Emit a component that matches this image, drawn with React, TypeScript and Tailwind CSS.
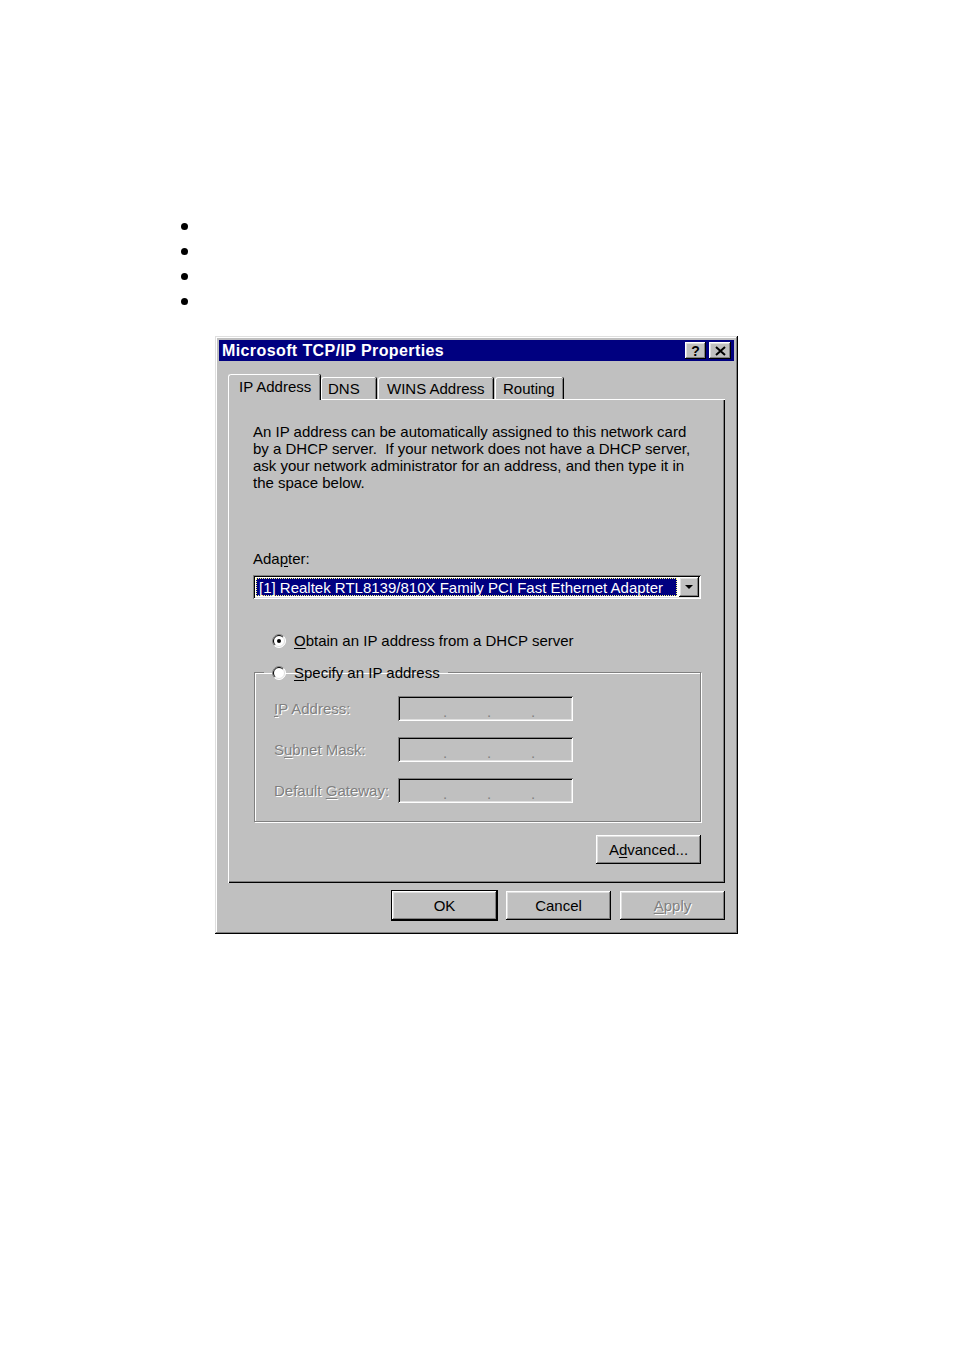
import type { ReactNode } from 'react';

const raised =
  'shadow-[inset_-1px_-1px_#000,inset_1px_1px_#fff,inset_-2px_-2px_#808080,inset_2px_2px_#dfdfdf]';
const sunken =
  'shadow-[inset_1px_1px_#808080,inset_-1px_-1px_#fff,inset_2px_2px_#000,inset_-2px_-2px_#dfdfdf]';
const disabledText = 'text-[#808080] [text-shadow:1px_1px_0_#fff]';

function Key({ children }: { children: ReactNode }) {
  return <span className="underline underline-offset-2">{children}</span>;
}

// classic sunken radio circle
function Radio({ checked }: { checked?: boolean }) {
  return (
    <svg width="14" height="14" viewBox="0 0 14 14" className="shrink-0">
      <circle cx="7" cy="7" r="6.5" fill="#fff" />
      <path d="M2.4 11.6A6.5 6.5 0 0 1 11.6 2.4" fill="none" stroke="#808080" strokeWidth="1" />
      <path d="M3.1 10.9A5.5 5.5 0 0 1 10.9 3.1" fill="none" stroke="#000" strokeWidth="1" />
      <path d="M11.6 2.4A6.5 6.5 0 0 1 2.4 11.6" fill="none" stroke="#fff" strokeWidth="1" />
      <path d="M10.9 3.1A5.5 5.5 0 0 1 3.1 10.9" fill="none" stroke="#dfdfdf" strokeWidth="1" />
      {checked && <circle cx="7" cy="7" r="2" fill="#000" />}
    </svg>
  );
}

function Tab({ label, selected, className }: { label: string; selected?: boolean; className: string }) {
  return (
    <div
      className={
        selected
          ? `relative z-10 -mb-px flex h-[26px] items-start rounded-tl-[3px] rounded-tr-[2px] border-l border-t border-white bg-[#c0c0c0] pt-[3px] shadow-[inset_-1px_0_#808080,1px_0_#000] ${className}`
          : `flex h-[22px] items-start rounded-tl-[3px] rounded-tr-[2px] border-l border-t border-white pt-[2px] shadow-[inset_-1px_0_#808080,1px_0_#000] ${className}`
      }
    >
      {label}
    </div>
  );
}

function IpField({ label }: { label: ReactNode }) {
  return (
    <div className="flex h-[25px] items-center">
      <span className={`w-[124px] ${disabledText}`}>{label}</span>
      <div className={`relative h-[25px] w-[175px] ${sunken}`}>
        <div className="flex h-full items-center pl-[45px] pt-[5px] text-[#808080]">
          <span className="w-[44px]">.</span>
          <span className="w-[44px]">.</span>
          <span>.</span>
        </div>
      </div>
    </div>
  );
}

function Button({ children, className = '' }: { children: ReactNode; className?: string }) {
  return (
    <div className={`flex h-[29px] w-[105px] items-center justify-center bg-[#c0c0c0] ${raised} ${className}`}>
      {children}
    </div>
  );
}

export default function App() {
  return (
    <div className="min-h-[1350px] bg-white font-['Liberation_Sans',Arial,sans-serif] text-[15px] leading-[17px] text-black">
      <ul className="flex flex-col gap-[18px] pl-[181px] pt-[223px]">
        {[0, 1, 2, 3].map((i) => (
          <li key={i} className="h-[7px] w-[7px] rounded-full bg-black" />
        ))}
      </ul>

      <div className="ml-[215px] mt-[31px] w-[523px] bg-[#c0c0c0] p-[4px] shadow-[inset_-1px_-1px_#000,inset_1px_1px_#dfdfdf,inset_-2px_-2px_#808080,inset_2px_2px_#fff]">
        {/* title bar */}
        <div className="flex h-[21px] items-center justify-between bg-[#000080] pl-[3px] pr-[3px]">
          <span className="text-[16px] font-bold tracking-[0.4px] text-white">Microsoft TCP/IP Properties</span>
          <div className="flex gap-[3px]">
            <div className={`flex h-[17px] w-[21px] items-center justify-center bg-[#c0c0c0] text-[14px] font-bold leading-none ${raised}`}>
              ?
            </div>
            <div className={`flex h-[17px] w-[22px] items-center justify-center bg-[#c0c0c0] ${raised}`}>
              <svg width="11" height="10" viewBox="0 0 11 10">
                <path d="M1 1L10 9M10 1L1 9" stroke="#000" strokeWidth="2" />
              </svg>
            </div>
          </div>
        </div>

        <div className="px-[9px]">
          {/* tabs */}
          <div className="mt-[13px] flex items-end">
            <Tab label="IP Address" selected className="w-[92px] pl-[10px]" />
            <Tab label="DNS" className="ml-px w-[55px] pl-[6px]" />
            <Tab label="WINS Address" className="ml-[2px] w-[115px] pl-[8px]" />
            <Tab label="Routing" className="ml-[2px] w-[68px] pl-[7px]" />
          </div>

          {/* panel */}
          <div className="flex h-[484px] flex-col pl-[25px] pr-[24px] pt-[24px] shadow-[inset_1px_1px_#fff,inset_-1px_-1px_#000,inset_-2px_-2px_#808080]">
            <p>
              An IP address can be automatically assigned to this network card
              <br />
              by a DHCP server.&nbsp; If your network does not have a DHCP server,
              <br />
              ask your network administrator for an address, and then type it in
              <br />
              the space below.
            </p>

            <p className="mt-[59px]">
              Ada<Key>p</Key>ter:
            </p>
            <div className={`mt-[8px] flex h-[24px] w-[448px] items-stretch bg-white p-[2px] ${sunken}`}>
              <div className="m-[1px] flex flex-1 items-center bg-[#000080] pl-[3px] text-white outline-1 outline-dotted outline-[#ffff80] -outline-offset-1">
                [1] Realtek RTL8139/810X Family PCI Fast Ethernet Adapter
              </div>
              <div className={`ml-[1px] flex w-[20px] items-center justify-center bg-[#c0c0c0] ${raised}`}>
                <svg width="8" height="5" viewBox="0 0 8 5">
                  <path d="M0 0H8L4 4Z" fill="#000" />
                </svg>
              </div>
            </div>

            <div className="mt-[33px] flex items-center gap-[8px] pl-[19px]">
              <Radio checked />
              <span>
                <Key>O</Key>btain an IP address from a DHCP server
              </span>
            </div>

            <fieldset className="mt-[15px] ml-px h-[158px] border border-[#808080] pl-[9px] shadow-[inset_1px_1px_#fff,1px_1px_#fff]">
              <legend className="flex items-center gap-[8px] pl-[8px] pr-[8px]">
                <Radio />
                <span>
                  <Key>S</Key>pecify an IP address
                </span>
              </legend>
              <div className="mt-[15px] flex flex-col gap-[16px] pl-[10px]">
                <IpField
                  label={
                    <>
                      <Key>I</Key>P Address:
                    </>
                  }
                />
                <IpField
                  label={
                    <>
                      S<Key>u</Key>bnet Mask:
                    </>
                  }
                />
                <IpField
                  label={
                    <>
                      Default <Key>G</Key>ateway:
                    </>
                  }
                />
              </div>
            </fieldset>

            <div className="mt-[13px] flex justify-end">
              <Button>
                <span>
                  A<Key>d</Key>vanced...
                </span>
              </Button>
            </div>
          </div>

          {/* dialog buttons */}
          <div className="mt-[8px] flex justify-end gap-[9px] pb-[10px]">
            <Button className="outline outline-1 outline-black">OK</Button>
            <Button>Cancel</Button>
            <Button>
              <span className={disabledText}>
                <Key>A</Key>pply
              </span>
            </Button>
          </div>
        </div>
      </div>
    </div>
  );
}
